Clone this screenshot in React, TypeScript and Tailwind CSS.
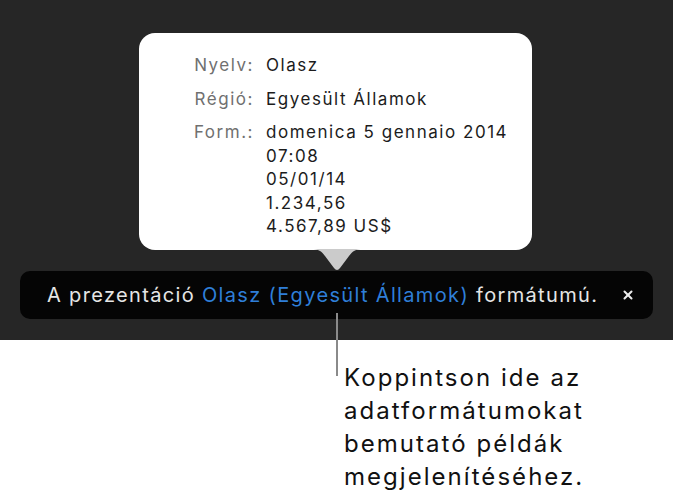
import { X } from 'lucide-react';

const formats = ['domenica 5 gennaio 2014', '07:08', '05/01/14', '1.234,56', '4.567,89 US$'];

function InfoRow({ label, children }: { label: string; children: React.ReactNode }) {
  return (
    <div className="flex items-start">
      <div className="w-[127px] pr-[12px] text-right text-[#707070]">{label}</div>
      <div className="text-[#1c1c1c]">{children}</div>
    </div>
  );
}

export default function App() {
  return (
    <div
      className="w-[673px] h-[500px] bg-white overflow-hidden"
      style={{ fontFamily: 'Inter, "Liberation Sans", sans-serif' }}
    >
      <div className="relative h-[340px] bg-[#262626] pt-[33px]">
        <div className="relative ml-[139px] w-[393px] h-[217px] rounded-[16px] bg-white pt-[21px] text-[17px] tracking-[0.09em]">
          <div className="flex flex-col gap-[10px] leading-[23.5px]">
            <InfoRow label="Nyelv:">Olasz</InfoRow>
            <InfoRow label="Régió:">Egyesült Államok</InfoRow>
            <InfoRow label="Form.:">
              {formats.map((f) => (
                <div key={f}>{f}</div>
              ))}
            </InfoRow>
          </div>
          <svg
            className="absolute left-[172px] top-[216px]"
            width="52"
            height="22"
            viewBox="0 0 52 22"
          >
            <path d="M0 0 C8 0 10 2 14 7 L23 19 C25 21.5 27 21.5 29 19 L38 7 C42 2 44 0 52 0 Z" fill="#cbcbcb" />
          </svg>
        </div>
        <div className="mt-[21px] mx-[20px] h-[48px] rounded-[10px] bg-[#050505] flex items-center pl-[27px] pr-[18px]">
          <div className="flex-1 text-[20px] text-[#e6e6e6] tracking-[0.067em]">
            A prezentáció <span className="text-[#2f7fd8]">Olasz (Egyesült Államok)</span> formátumú.
          </div>
          <X size={14} strokeWidth={3.5} className="text-[#ececec]" />
        </div>
        <div className="absolute left-[336px] top-[313px] w-[2px] h-[63px] bg-[#8a8a8a]" />
      </div>
      <div className="pl-[344px] pt-[21px] text-[24px] leading-[33px] tracking-[0.085em] text-[#111]">
        <div>Koppintson ide az</div>
        <div>adatformátumokat</div>
        <div>bemutató példák</div>
        <div>megjelenítéséhez.</div>
      </div>
    </div>
  );
}
